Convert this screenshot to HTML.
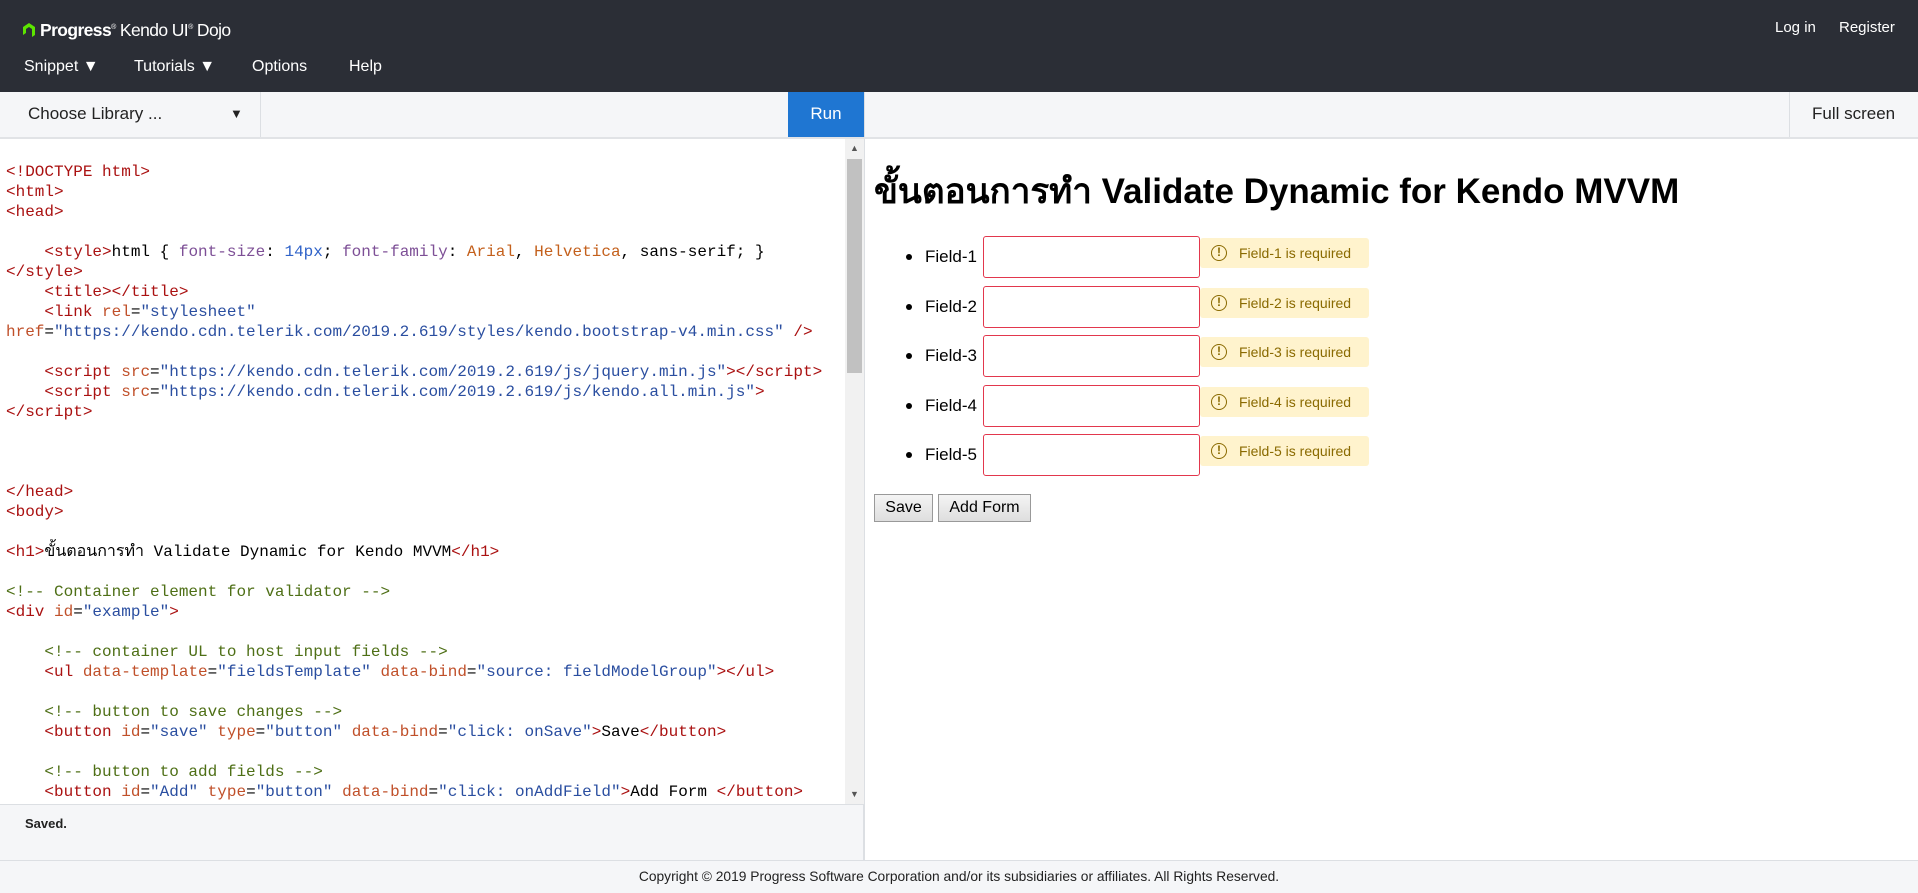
<!DOCTYPE html>
<html><head><meta charset="utf-8"><style>
*{box-sizing:border-box;margin:0;padding:0}
body{width:1918px;height:893px;position:relative;overflow:hidden;font-family:"Liberation Sans",Arial,sans-serif;background:#fff}
.hdr{position:absolute;left:0;top:0;width:1918px;height:92px;background:#2b2e36;color:#fff}
.hdr .t{position:absolute;font-size:16px;white-space:nowrap}
.tb{position:absolute;left:0;top:92px;width:1918px;height:47px;background:#f5f6f8;border-bottom:2px solid #e1e3e6}
.tb .t{position:absolute;font-size:17px;color:#222;white-space:nowrap}
.code{position:absolute;left:6px;top:162px;font-family:"Liberation Mono","DejaVu Sans Mono",monospace;font-size:16px;line-height:20px;white-space:pre;color:#000}
.g{color:#a11}.a{color:#c0502a}.s{color:#2a4ea0}.c{color:#4e6f16}.p{color:#7d4f96}.n{color:#2f62c8}.o{color:#c4601c}
.sb{position:absolute;left:845px;top:139px;width:19px;height:665px;background:#f1f1f1}
.status{position:absolute;left:0;top:804px;width:864px;height:56px;background:#f5f6f8;border-top:1px solid #dcdfe3;border-right:1px solid #dcdfe3}
.foot{position:absolute;left:0;top:860px;width:1918px;height:33px;background:#f5f6f8;border-top:1px solid #dcdfe3;font-size:13.8px;color:#222;text-align:center;line-height:32px}
.pane{position:absolute;left:864px;top:139px;width:1px;height:721px;background:#dcdfe3}
h1{position:absolute;left:874px;top:164px;font-size:35px;font-weight:bold;white-space:nowrap;font-family:"Liberation Sans",sans-serif}
.row{position:absolute;left:0;height:42px}
.row .b{position:absolute;left:906px;top:18px;width:6px;height:6px;border-radius:3px;background:#000}
.row .l{position:absolute;left:925px;top:11px;font-size:17px;color:#000;white-space:nowrap}
.row .i{position:absolute;left:983px;top:0;width:217px;height:42px;border:1px solid #e2374d;border-radius:3px}
.row .tip{position:absolute;left:1200px;top:2px;width:169px;height:30px;background:#fff3cd;border-radius:3px;color:#8a6a00;font-size:14px;line-height:30px;padding-left:39px;white-space:nowrap}
.row .tip i{position:absolute;left:11px;top:7px;width:16px;height:16px;border:1.5px solid #8a6a00;border-radius:50%;font-style:normal;font-size:12px;line-height:13px;text-align:center;font-weight:bold}
.btn{position:absolute;top:494px;height:28px;border:1px solid #999;background:linear-gradient(#f4f4f4,#dedede);font-size:16px;line-height:26px;text-align:center;color:#000}
</style></head><body>
<div class="hdr">
 <svg style="position:absolute;left:21px;top:20px" width="16" height="18" viewBox="0 0 16 18"><path d="M2 7 L8 3 L14 7 L14 15 L11 17 L11 9 L8 7 L5 9 L5 13 L2 15Z" fill="#5ce500"/></svg>
 <div class="t" style="left:40px;top:20px;font-size:17.5px;letter-spacing:-0.6px"><b>Progress</b><sup style="font-size:7px">®</sup> Kendo UI<sup style="font-size:7px">®</sup> Dojo</div>
 <div class="t" style="left:24px;top:58px">Snippet ▼</div>
 <div class="t" style="left:134px;top:58px">Tutorials ▼</div>
 <div class="t" style="left:252px;top:58px">Options</div>
 <div class="t" style="left:349px;top:58px">Help</div>
 <div class="t" style="left:1775px;top:19px;font-size:15px">Log in</div>
 <div class="t" style="left:1839px;top:19px;font-size:15px">Register</div>
</div>
<div class="tb">
 <div class="t" style="left:28px;top:12px">Choose Library ...</div>
 <div class="t" style="left:230px;top:14px;font-size:13px">▼</div>
 <div style="position:absolute;left:260px;top:0;width:1px;height:45px;background:#dcdfe3"></div>
 <div style="position:absolute;left:788px;top:0;width:76px;height:45px;background:#1f76d2;color:#fff;font-size:17px;text-align:center;line-height:44px">Run</div>
 <div style="position:absolute;left:864px;top:0;width:1px;height:45px;background:#dcdfe3"></div>
 <div style="position:absolute;left:1789px;top:0;width:1px;height:45px;background:#dcdfe3"></div>
 <div class="t" style="left:1812px;top:12px">Full screen</div>
</div>
<div class="code"><span class="g">&lt;!DOCTYPE html&gt;</span>
<span class="g">&lt;html&gt;</span>
<span class="g">&lt;head&gt;</span>

    <span class="g">&lt;style&gt;</span>html { <span class="p">font-size</span>: <span class="n">14px</span>; <span class="p">font-family</span>: <span class="o">Arial</span>, <span class="o">Helvetica</span>, sans-serif; }
<span class="g">&lt;/style&gt;</span>
    <span class="g">&lt;title&gt;&lt;/title&gt;</span>
    <span class="g">&lt;link</span> <span class="a">rel</span>=<span class="s">"stylesheet"</span>
<span class="a">href</span>=<span class="s">"https://kendo.cdn.telerik.com/2019.2.619/styles/kendo.bootstrap-v4.min.css"</span> <span class="g">/&gt;</span>

    <span class="g">&lt;script</span> <span class="a">src</span>=<span class="s">"https://kendo.cdn.telerik.com/2019.2.619/js/jquery.min.js"</span><span class="g">&gt;&lt;/script&gt;</span>
    <span class="g">&lt;script</span> <span class="a">src</span>=<span class="s">"https://kendo.cdn.telerik.com/2019.2.619/js/kendo.all.min.js"</span><span class="g">&gt;</span>
<span class="g">&lt;/script&gt;</span>



<span class="g">&lt;/head&gt;</span>
<span class="g">&lt;body&gt;</span>

<span class="g">&lt;h1&gt;</span>ขั้นตอนการทำ Validate Dynamic for Kendo MVVM<span class="g">&lt;/h1&gt;</span>

<span class="c">&lt;!-- Container element for validator --&gt;</span>
<span class="g">&lt;div</span> <span class="a">id</span>=<span class="s">"example"</span><span class="g">&gt;</span>

    <span class="c">&lt;!-- container UL to host input fields --&gt;</span>
    <span class="g">&lt;ul</span> <span class="a">data-template</span>=<span class="s">"fieldsTemplate"</span> <span class="a">data-bind</span>=<span class="s">"source: fieldModelGroup"</span><span class="g">&gt;&lt;/ul&gt;</span>

    <span class="c">&lt;!-- button to save changes --&gt;</span>
    <span class="g">&lt;button</span> <span class="a">id</span>=<span class="s">"save"</span> <span class="a">type</span>=<span class="s">"button"</span> <span class="a">data-bind</span>=<span class="s">"click: onSave"</span><span class="g">&gt;</span>Save<span class="g">&lt;/button&gt;</span>

    <span class="c">&lt;!-- button to add fields --&gt;</span>
    <span class="g">&lt;button</span> <span class="a">id</span>=<span class="s">"Add"</span> <span class="a">type</span>=<span class="s">"button"</span> <span class="a">data-bind</span>=<span class="s">"click: onAddField"</span><span class="g">&gt;</span>Add Form <span class="g">&lt;/button&gt;</span></div>
<div class="sb"><div style="position:absolute;left:2px;top:20px;width:15px;height:214px;background:#c1c1c1"></div>
<div style="position:absolute;left:5px;top:4px;font-size:9px;color:#555">▲</div>
<div style="position:absolute;left:5px;top:650px;font-size:9px;color:#555">▼</div></div>
<div class="status"><div style="position:absolute;left:25px;top:11px;font-size:13px;font-weight:bold;color:#222">Saved.</div></div>
<div class="pane"></div>
<h1>ขั้นตอนการทำ Validate Dynamic for Kendo MVVM</h1>
<div class="row" style="top:236px"><div class="b"></div><div class="l">Field-1</div><div class="i"></div><div class="tip"><i>!</i>Field-1 is required</div></div>
<div class="row" style="top:286px"><div class="b"></div><div class="l">Field-2</div><div class="i"></div><div class="tip"><i>!</i>Field-2 is required</div></div>
<div class="row" style="top:335px"><div class="b"></div><div class="l">Field-3</div><div class="i"></div><div class="tip"><i>!</i>Field-3 is required</div></div>
<div class="row" style="top:385px"><div class="b"></div><div class="l">Field-4</div><div class="i"></div><div class="tip"><i>!</i>Field-4 is required</div></div>
<div class="row" style="top:434px"><div class="b"></div><div class="l">Field-5</div><div class="i"></div><div class="tip"><i>!</i>Field-5 is required</div></div>
<div class="btn" style="left:874px;width:59px">Save</div>
<div class="btn" style="left:938px;width:93px">Add Form</div>
<div class="foot">Copyright © 2019 Progress Software Corporation and/or its subsidiaries or affiliates. All Rights Reserved.</div>
</body></html>
